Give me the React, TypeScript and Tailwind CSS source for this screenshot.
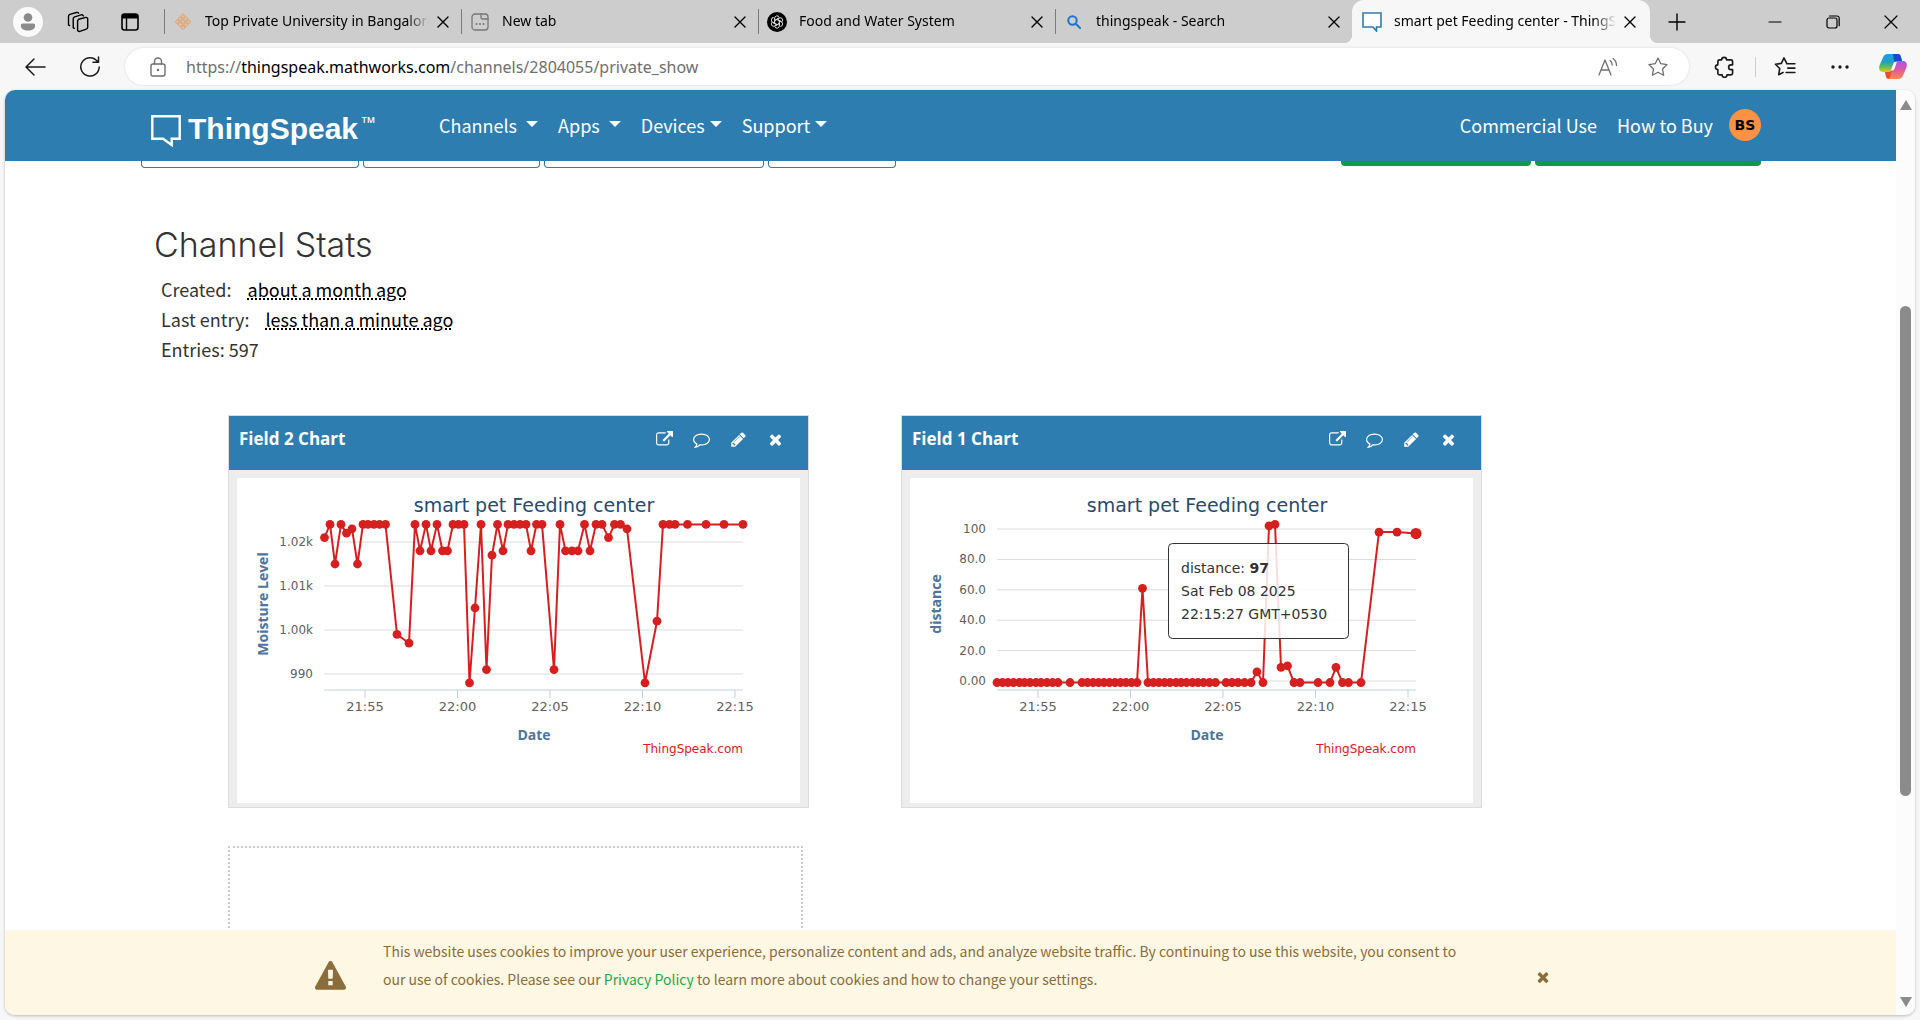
import React from "react";

const EXTERNAL =
  "M1408 928v320q0 119-84.5 203.5t-203.5 84.5h-832q-119 0-203.5-84.5t-84.5-203.5v-832q0-119 84.5-203.5t203.5-84.5h704q14 0 23 9t9 23v64q0 14-9 23t-23 9h-704q-66 0-113 47t-47 113v832q0 66 47 113t113 47h832q66 0 113-47t47-113v-320q0-14 9-23t23-9h64q14 0 23 9t9 23zm384-864v512q0 26-19 45t-45 19-45-19l-176-176-652 652q-10 10-23 10t-23-10l-114-114q-10-10-10-23t10-23l652-652-176-176q-19-19-19-45t19-45 45-19h512q26 0 45 19t19 45z";
const TIMES =
  "M1490 1322q0 40-28 68l-136 136q-28 28-68 28t-68-28l-294-294-294 294q-28 28-68 28t-68-28l-136-136q-28-28-28-68t28-68l294-294-294-294q-28-28-28-68t28-68l136-136q28-28 68-28t68 28l294 294 294-294q28-28 68-28t68 28l136 136q28 28 28 68t-28 68l-294 294 294 294q28 28 28 68z";
const PENCIL =
  "M491 1536l91-91-235-235-91 91v107h128v128h107zm523-928q0-22-22-22-10 0-17 7l-542 542q-7 7-7 17 0 22 22 22 10 0 17-7l542-542q7-7 7-17zm-54-192l416 416-832 832h-416v-416zm683 96q0 53-37 90l-166 166-416-416 166-165q36-38 90-38 53 0 91 38l235 234q37 39 37 91z";
const COMMENT =
  "M896 384q-204 0-381.5 69.5t-282 187.5-104.5 255q0 112 71.5 213.5t201.5 175.5l87 50-27 96q-24 91-70 172 152-63 275-171l43-38 57 6q69 8 130 8 204 0 381.5-69.5t282-187.5 104.5-255-104.5-255-282-187.5-381.5-69.5zm896 512q0 174-120 321.5t-326 233-450 85.5q-70 0-145-8-198 175-460 242-49 14-114 22h-5q-15 0-27-10.5t-16-27.5v-1q-3-4-.5-12t2-10 4.5-9.5l6-9 7-8.5 8-9q7-8 31-34.5t34.5-38 31-39.5 32.5-51 27-59 26-76q-157-89-247.5-220t-90.5-281q0-130 71-248.5t191-204.5 286-136.5 348-50.5 348 50.5 286 136.5 191 204.5 71 248.5z";
const WARNING =
  "M1024 1375v-190q0-14-9.5-23.5t-22.5-9.5h-192q-13 0-22.5 9.5t-9.5 23.5v190q0 14 9.5 23.5t22.5 9.5h192q13 0 22.5-9.5t9.5-23.5zm-2-374l18-459q0-12-10-19-13-11-24-11h-220q-11 0-24 11-10 7-10 21l17 457q0 10 10 16.5t24 6.5h185q14 0 23.5-6.5t10.5-16.5zm-14-934l768 1408q35 63-2 126-17 29-46.5 46t-63.5 17h-1536q-34 0-63.5-17t-46.5-46q-37-63-2-126l768-1408q17-31 47-49t65-18 65 18 47 49z";

function Glyph({ d, className }: { d: string; className: string }) {
  return (
    <svg viewBox="0 0 1792 1792" className={className} fill="currentColor" aria-hidden="true">
      <path d={d} />
    </svg>
  );
}

function Line({ children, size = 20, width = 1.3, box = 20 }: { children: React.ReactNode; size?: number; width?: number; box?: number }) {
  return (
    <svg
      width={size}
      height={size}
      viewBox={`0 0 ${box} ${box}`}
      fill="none"
      stroke="currentColor"
      strokeWidth={width}
      strokeLinecap="round"
      strokeLinejoin="round"
      aria-hidden="true"
    >
      {children}
    </svg>
  );
}

function CloseIcon() {
  return (
    <Line size={12} box={12} width={1.4}>
      <path d="M1 1l10 10M11 1L1 11" />
    </Line>
  );
}

const LATTICE = [0, 4, 8];

const tabs = [
  {
    title: "Top Private University in Bangalore",
    icon: (
      <svg width="18" height="18" viewBox="0 0 18 18" fill="none" stroke="#e2a878" strokeWidth="1.1">
        <g transform="rotate(45 9 9) translate(3.4 3.4)">
          {LATTICE.map((x) => LATTICE.map((y) => <rect key={`${x}-${y}`} x={x} y={y} width="2.900" height="2.900" />))}
        </g>
      </svg>
    ),
  },
  {
    title: "New tab",
    icon: (
      <Line size={18} box={18} width={1.3}>
        <g stroke="#777">
          <rect x="1" y="1" width="16" height="16" rx="3" />
          <path d="M10 1v3.500a1.500 1.500 0 0 0 1.500 1.500H17" />
          <path d="M5.500 11h.01M9 11h.01M12.500 11h.01" strokeWidth="2" />
        </g>
      </Line>
    ),
  },
  {
    title: "Food and Water System",
    icon: (
      <svg width="20" height="20" viewBox="0 0 20 20">
        <circle cx="10" cy="10" r="10" fill="#000" />
        <g fill="none" stroke="#ddd" strokeWidth="1">
          {[0, 60, 120, 180, 240, 300].map((a) => (
            <path key={a} transform={`rotate(${a} 10 10)`} d="M7.600 11.400V6.200a2.500 2.500 0 0 1 4.600-1.200M7.600 8.600l4.400-2.500" />
          ))}
        </g>
      </svg>
    ),
  },
  {
    title: "thingspeak - Search",
    icon: (
      <Line size={14} box={14} width={2}>
        <g stroke="#1a73d0">
          <circle cx="5.500" cy="5.500" r="4.200" />
          <path d="M9 9l4 4" />
        </g>
      </Line>
    ),
  },
  {
    title: "smart pet Feeding center - ThingSpeak IoT",
    active: true,
    icon: (
      <svg width="20" height="20" viewBox="0 0 20 20" fill="#fff" stroke="#2e7db1" strokeWidth="1.600">
        <path d="M1 1h18v14h-4.500V19L11 15H1z" />
      </svg>
    ),
  },
];

function TabBar() {
  return (
    <div className="flex h-[43px] items-center bg-[#cdcdcd] text-black">
      <div className="flex w-[164px] shrink-0 items-center gap-6 pl-[13px]">
        <button aria-label="Profile" className="flex size-[30px] items-center justify-center rounded-full bg-[#fafafa]">
          <svg width="16" height="18" viewBox="0 0 16 18" fill="#8b8b8b">
            <circle cx="8" cy="4.500" r="4.300" />
            <path d="M2.500 10.500h11a1.700 1.700 0 0 1 1.700 1.700c0 3.400-3 5.300-7.200 5.300S.8 15.600.8 12.200a1.700 1.700 0 0 1 1.700-1.700z" />
          </svg>
        </button>
        <button aria-label="Workspaces">
          <Line size={22} box={22} width={1.4}>
            <path d="M11.700 8.300l7-1.900a1.600 1.600 0 0 1 2 1.600v8.200c0 1-.5 1.600-1.400 1.900l-6.500 2.200a1.600 1.600 0 0 1-2.200-1.600v-8.500c0-1 .3-1.600 1.100-1.900z" />
            <path d="M7.300 17.300l-1.100-.6V7.700c0-1 .5-1.600 1.400-1.900l6.500-1.900c1.300-.3 2 .2 2.300 1" />
            <path d="M2.600 14.600l-1.100-.7V5.400c0-1 .5-1.700 1.400-2l6.500-1.900c1.200-.3 1.900.1 2.200.7" />
          </Line>
        </button>
        <button aria-label="Tab actions" className="ml-2">
          <svg width="18" height="18" viewBox="0 0 18 18" aria-hidden="true">
            <rect x="1" y="1" width="16" height="16" rx="2.500" fill="none" stroke="#000" strokeWidth="1.600" />
            <path d="M1 3.500A2.500 2.500 0 0 1 3.500 1h11A2.500 2.500 0 0 1 17 3.500V5.500H1z" />
            <path d="M5.500 5v12" stroke="#000" strokeWidth="1.400" />
          </svg>
        </button>
      </div>
      {tabs.map((t) => (
        <div
          key={t.title}
          className={
            t.active
              ? "relative flex h-full w-[298px] min-w-0 items-center rounded-t-xl bg-[#f7f7f7] pr-[14px] pl-[10px]"
              : "flex h-[25px] w-[297px] min-w-0 items-center border-l border-[#7a7a7a] pr-3 pl-2"
          }
        >
          {t.active && (
            <>
              <span className="absolute bottom-0 -left-2 size-2 bg-[radial-gradient(circle_at_0_0,#cdcdcd_8px,#f7f7f7_8px)]" />
              <span className="absolute -right-2 bottom-0 size-2 bg-[radial-gradient(circle_at_100%_0,#cdcdcd_8px,#f7f7f7_8px)]" />
            </>
          )}
          <span className="flex w-5 shrink-0 justify-center">{t.icon}</span>
          <span className="mb-0.5 ml-3 min-w-0 flex-1 overflow-hidden font-['Noto_Sans',sans-serif] text-[14px] leading-5 whitespace-nowrap [mask-image:linear-gradient(to_right,black_90%,transparent)]">
            {t.title}
          </span>
          <button aria-label={`Close ${t.title}`} className="ml-2 shrink-0">
            <CloseIcon />
          </button>
        </div>
      ))}
      <button aria-label="New tab" className="ml-[18px]">
        <Line size={18} box={18} width={1.4}>
          <path d="M9 1v16M1 9h16" />
        </Line>
      </button>
      <div className="ml-auto flex items-center gap-[44px] pr-[22px]">
        <button aria-label="Minimize">
          <Line size={14} box={14} width={1.2}>
            <path d="M1 7h12" />
          </Line>
        </button>
        <button aria-label="Restore">
          <Line size={14} box={14} width={1.2}>
            <rect x="1" y="3" width="10" height="10" rx="2" />
            <path d="M3.500 1H11a2.200 2.200 0 0 1 2.200 2.200v7.500" />
          </Line>
        </button>
        <button aria-label="Close window">
          <Line size={14} box={14} width={1.2}>
            <path d="M1 1l12 12M13 1L1 13" />
          </Line>
        </button>
      </div>
    </div>
  );
}

const STAR = "M10 1.800l2.500 5.200 5.700.8-4.100 4 1 5.700-5.100-2.700-5.100 2.700 1-5.700-4.100-4 5.700-.8z";

function Toolbar() {
  return (
    <div className="flex h-[47px] items-center bg-[#f7f7f7] pr-[13px] pl-[24px] text-[#1b1b1b]">
      <button aria-label="Back">
        <Line size={22} box={22} width={1.5}>
          <path d="M21 11H2M10 3l-8 8 8 8" />
        </Line>
      </button>
      <button aria-label="Refresh" className="ml-[33px]">
        <Line size={22} box={22} width={1.5}>
          <path d="M18.500 5.500A9.200 9.200 0 1 0 20.200 11M19.500 1v5.300h-5.500" />
        </Line>
      </button>
      <div className="ml-6 flex h-[37px] min-w-0 flex-1 items-center rounded-full bg-white pr-5 pl-[23px] text-[#6f6f6f] shadow-[0_0_3px_rgba(0,0,0,0.12)]">
        <Line size={20} box={20} width={1.4}>
          <rect x="3" y="7" width="14" height="12" rx="2" />
          <path d="M6.500 7V4.500a3.500 3.500 0 0 1 7 0V7" />
          <path d="M10 13h.01" strokeWidth="2.500" />
        </Line>
        <div className="relative ml-[18px] flex-1 font-['Noto_Sans',sans-serif] text-[16px] leading-6 whitespace-nowrap">
          <input aria-label="Address" className="absolute inset-0 w-full bg-transparent outline-none" />
          https://<span className="text-black">thingspeak.mathworks.com</span>/channels/2804055/private_show
        </div>
        <button aria-label="Read aloud" className="mr-[29px]">
          <Line size={20} box={20} width={1.3}>
            <path d="M1 18L7 3l6 15M3.200 13h7.600M12 3.500c1.500 1 2.200 2.600 2.200 4.500M15 1.500c2.300 1.600 3.500 4 3.500 7" />
          </Line>
        </button>
        <button aria-label="Add to favorites">
          <Line size={22} width={1.2}>
            <path d={STAR} />
          </Line>
        </button>
      </div>
      <button aria-label="Extensions" className="ml-[25px]">
        <Line size={22} width={1.5}>
          <path d="M7 3.500a2.200 2.200 0 0 1 4.400 0h4a1.500 1.500 0 0 1 1.500 1.500v3h-1.400a2.200 2.200 0 0 0 0 4.400h1.400v3.300a1.500 1.500 0 0 1-1.500 1.500h-3.600a2.200 2.200 0 0 1-4.400 0H5a1.500 1.500 0 0 1-1.500-1.500v-3.300a2.200 2.200 0 0 1 0-4.400V5A1.500 1.500 0 0 1 5 3.500z" />
        </Line>
      </button>
      <span className="ml-[19px] h-5 w-px bg-[#cfcfcf]" />
      <button aria-label="Favorites" className="ml-[18px]">
        <Line size={22} width={1.5}>
          <path d="M11.500 6.500L9 1.800 6.700 6.700l-5.400.8 3.900 3.900-.9 5.600 3.900-2M11.500 7H19M12.500 11H19M11 15h8" />
        </Line>
      </button>
      <button aria-label="Settings and more" className="ml-[35px]">
        <svg width="18" height="4" viewBox="0 0 18 4" fill="#1b1b1b">
          <circle cx="2" cy="2" r="1.700" />
          <circle cx="9" cy="2" r="1.700" />
          <circle cx="16" cy="2" r="1.700" />
        </svg>
      </button>
      <button aria-label="Copilot" className="ml-[30px]">
        <svg width="28" height="27" viewBox="0 0 28 27">
          <defs>
            <linearGradient id="cpA" x1="0" y1="0" x2="0" y2="1">
              <stop offset="0" stopColor="#1aa0e8" />
              <stop offset=".45" stopColor="#1f9fc0" />
              <stop offset=".75" stopColor="#6cc04a" />
              <stop offset="1" stopColor="#f2c51c" />
            </linearGradient>
            <linearGradient id="cpB" x1="0" y1="0" x2="0" y2="1">
              <stop offset="0" stopColor="#a458f0" />
              <stop offset=".5" stopColor="#e4579a" />
              <stop offset="1" stopColor="#ff8a4a" />
            </linearGradient>
          </defs>
          <path d="M9 1h10c2 0 2.600 1.500 3 3l1 4h-4c-2.500 0-3.300.5-4 3l-2 5c-.7 2-1.700 3-4 3H4c-3.500 0-4.500-3-3.500-6.500L4 4.500C4.800 2 6.500 1 9 1z" fill="url(#cpA)" />
          <path d="M14 1h5c2 0 2.600 1.500 3 3l1 4h-4c-2 0-3 1-3.500 2.500z" fill="#1b48cf" />
          <path d="M19 26H10c-2 0-2.600-1.500-3-3l-1-4h3c2.500 0 3.300-.5 4-3l2-5c.7-2 1.700-3 4-3h5c3.500 0 4.500 3 3.500 6.500L24 22.500c-.8 2.500-2.500 3.500-5 3.500z" fill="url(#cpB)" />
          <path d="M6 19h3c2.300 0 3.300-.8 4-3l-1.500 7c-.4 2-1.500 3-2.500 2.800C7.700 25.500 7.300 24.400 7 23z" fill="#e8502c" />
          <path d="M15.800 8.700c-1 .5-1.300 1.300-1.700 2.500L12 17.300c1.500.4 3-.2 3.600-1.900l2.200-6.200z" fill="#fff" />
        </svg>
      </button>
    </div>
  );
}

function MenuItem({ label, tight }: { label: string; tight?: boolean }) {
  return (
    <button className={tight ? "flex items-center gap-[5px]" : "flex items-center gap-[9px]"}>
      {label}
      <span className="mb-0.5 border-x-6 border-t-6 border-x-transparent border-t-white" />
    </button>
  );
}

function SiteHeader() {
  return (
    <header className="flex h-[71px] items-center bg-[#2e7db1] pr-[135px] pb-px pl-[146px] font-['Noto_Sans_CJK_SC','Noto_Sans',sans-serif] text-[18px] leading-6 text-white">
      <a href="#home" className="mt-2 flex items-center font-['Liberation_Sans',sans-serif]">
        <svg width="30" height="32" viewBox="0 0 30 32" fill="none" stroke="#fff" strokeWidth="2.400" className="mt-1" aria-hidden="true">
          <path d="M1.300 1.300h27.400v22.400h-8V30L12 23.700H1.300z" />
        </svg>
        <span className="ml-[7px] text-[30px] leading-8 font-bold">ThingSpeak</span>
        <span className="ml-0.5 self-start text-[16px] leading-6">™</span>
      </a>
      <nav className="ml-[63px] flex items-center gap-5">
        <MenuItem label="Channels" />
        <MenuItem label="Apps" />
        <MenuItem label="Devices" tight />
        <MenuItem label="Support" tight />
      </nav>
      <div className="ml-auto flex items-center gap-5">
        <a href="#commercial">Commercial Use</a>
        <a href="#buy">How to Buy</a>
        <button className="-ml-1 flex size-8 items-center justify-center rounded-full bg-[#ff9142] font-['DejaVu_Sans',sans-serif] text-[14px] font-bold text-black">
          BS
        </button>
      </div>
    </header>
  );
}

type Pt = [number, number];
const flat = (xs: number[], v: number): Pt[] => xs.map((x) => [x, v]);

const moisture: Pt[] = [
  [87.5, 1021], [93, 1024], [98, 1015], [104, 1024], [109.5, 1022], [115, 1023], [120.5, 1015],
  ...flat([126, 131, 137, 142.5, 148.5], 1024),
  [160, 999], [172, 997], [178, 1024], [183, 1018], [189, 1024], [194, 1018], [200, 1024], [205.5, 1018], [210.5, 1018],
  ...flat([216, 221.5, 227], 1024),
  [232.5, 988], [238, 1005], [244, 1024], [249.5, 991], [255, 1017], [260.5, 1024], [266, 1018],
  ...flat([271, 277, 283, 289], 1024),
  [294, 1018], [299.5, 1024], [305, 1024], [317, 991], [323, 1024],
  ...flat([328.5, 335, 341], 1018),
  [347.5, 1024], [353, 1018], [359, 1024], [365, 1024], [371.5, 1021], [377.5, 1024], [383.5, 1024], [390, 1023], [408, 988], [420, 1002],
  ...flat([426, 432.5, 438, 450.5, 469, 487, 506], 1024),
];

const distance: Pt[] = [
  ...flat([87, 92.5, 98, 103.5, 109.5, 114.5, 120, 126, 131, 137, 142.5, 148, 160, 172, 177.5, 183, 188.5, 194, 199.5, 205, 210.5, 216, 221.5, 227], -1),
  [232.5, 61],
  ...flat([238, 243.5, 249, 254.5, 260, 266, 271, 276.5, 282.5, 288, 293.5, 299.5, 305.5, 316, 322, 328, 334.5, 341], -1),
  [347, 6], [353, -1], [359, 102], [365, 103], [371, 9], [377.5, 10],
  ...flat([384, 390, 408, 420], -1),
  [426, 9],
  ...flat([432.5, 438.5, 451], -1),
  [469, 98], [487, 98], [506, 97],
];

const times: [number, string][] = [
  [128, "21:55"], [220.5, "22:00"], [313, "22:05"], [405.5, "22:10"], [498, "22:15"],
];

interface ChartProps {
  points: Pt[];
  grid: [number, string][];
  y0: number;
  perUnit: number;
  base: number;
  label: string;
  tooltip?: boolean;
}

function Chart({ points, grid, y0, perUnit, base, label, tooltip }: ChartProps) {
  const y = (v: number) => y0 - (v - base) * perUnit;
  return (
    <svg viewBox="0 0 563 325" className="block w-full bg-white font-['DejaVu_Sans',sans-serif]" role="img" aria-label={`${label} chart`}>
      <text x="297" y="34" textAnchor="middle" fontSize="19" fill="#274b6d">
        smart pet Feeding center
      </text>
      {grid.map(([v, t]) => (
        <g key={t}>
          <path d={`M87 ${y(v)}H506`} stroke="#dcdcdc" />
          <text x="76" y={y(v) + 4} textAnchor="end" fontSize="12" fill="#606060">
            {t}
          </text>
        </g>
      ))}
      <path d="M87 212H506" stroke="#c0d0e0" />
      {times.map(([x, t]) => (
        <g key={t}>
          <path d={`M${x} 212v8`} stroke="#c0d0e0" />
          <text x={x} y="233" textAnchor="middle" fontSize="13" fill="#606060">
            {t}
          </text>
        </g>
      ))}
      <text x="297" y="262" textAnchor="middle" fontSize="14" fontWeight="700" fill="#4d759e" className="font-['Open_Sans',sans-serif]">
        Date
      </text>
      <text transform="translate(31 126) rotate(-90)" textAnchor="middle" fontSize="14" fontWeight="700" fill="#4d759e" className="font-['Open_Sans',sans-serif]">
        {label}
      </text>
      <polyline points={points.map(([x, v]) => `${x},${y(v)}`).join(" ")} fill="none" stroke="#d62020" strokeWidth="2" strokeLinejoin="round" />
      {points.map(([x, v], i) => (
        <circle key={x} cx={x} cy={y(v)} r={tooltip && i === points.length - 1 ? 5.6 : 4.4} fill="#d62020" />
      ))}
      <text x="506" y="275" textAnchor="end" fontSize="12" fill="#d62020">
        ThingSpeak.com
      </text>
      {tooltip && (
        <g fontSize="14" fill="#333">
          <rect x="258.500" y="65.500" width="180" height="95" rx="4" fill="#fff" fillOpacity=".85" stroke="#333" />
          <text x="271" y="95">
            distance: <tspan fontWeight="700">97</tspan>
          </text>
          <text x="271" y="118">Sat Feb 08 2025</text>
          <text x="271" y="141">22:15:27 GMT+0530</text>
        </g>
      )}
    </svg>
  );
}

function Card({ title, children }: { title: string; children: React.ReactNode }) {
  return (
    <section className="min-w-0 border border-[#dcdcdc] bg-[#ededed]">
      <div className="flex h-[54px] items-start bg-[#2e7db1] pt-[11px] pr-6 pl-[10px] text-white">
        <h2 className="flex-1 font-['Open_Sans',sans-serif] text-[17px] leading-6 font-bold">{title}</h2>
        <div className="flex h-[25px] items-center gap-5">
          <button aria-label="Open in new window">
            <Glyph d={EXTERNAL} className="size-[17px]" />
          </button>
          <button aria-label="Comments">
            <Glyph d={COMMENT} className="size-[17px]" />
          </button>
          <button aria-label="Edit">
            <Glyph d={PENCIL} className="size-[17px]" />
          </button>
          <button aria-label="Close">
            <Glyph d={TIMES} className="size-[17px]" />
          </button>
        </div>
      </div>
      <div className="px-2 pt-2 pb-1">{children}</div>
    </section>
  );
}

function ScrollBar() {
  return (
    <div className="flex w-[19px] shrink-0 flex-col items-center bg-[#fcfcfc] py-2" aria-hidden="true">
      <span className="mt-0.5 border-x-6 border-b-10 border-x-transparent border-b-[#8b8b8b]" />
      <span className="h-[196px]" />
      <span className="h-[490px] w-[11px] rounded-full bg-[#8b8b8b]" />
      <span className="mt-auto border-x-6 border-t-10 border-x-transparent border-t-[#8b8b8b]" />
    </div>
  );
}

export default function App() {
  return (
    <div className="flex h-screen flex-col overflow-hidden bg-[#f7f7f7] font-['Open_Sans',sans-serif]">
      <TabBar />
      <Toolbar />
      <div className="mx-[5px] mb-[5px] flex min-h-0 flex-1 overflow-hidden rounded-[10px] bg-white shadow-[0_1px_3px_rgba(0,0,0,0.25)]">
        <div className="flex min-w-0 flex-1 flex-col">
          <SiteHeader />
          <main className="min-h-0 flex-1 overflow-hidden font-['Noto_Sans_CJK_SC','Noto_Sans',sans-serif] text-[#333]">
            <div className="flex gap-1 pr-[135px] pl-[136px]">
              <button aria-label="Private View" className="h-[7px] w-[218px] rounded-b border border-t-0 border-[#2e7db1]" />
              <button aria-label="Public View" className="h-[7px] w-[177px] rounded-b border border-t-0 border-[#2e7db1]" />
              <button aria-label="Channel Settings" className="h-[7px] w-[220px] rounded-b border border-t-0 border-[#2e7db1]" />
              <button aria-label="Sharing" className="h-[7px] w-[128px] rounded-b border border-t-0 border-[#2e7db1]" />
              <button aria-label="MATLAB Analysis" className="ml-auto h-[5px] w-[190px] rounded-b bg-[#0b9d46]" />
              <button aria-label="MATLAB Visualization" className="h-[5px] w-[226px] rounded-b bg-[#0b9d46]" />
            </div>
            <h1 className="mt-[57px] ml-[149px] font-['Inter',sans-serif] text-[34px] leading-10 font-light">Channel Stats</h1>
            <div className="mt-[9px] ml-[156px] text-[18px] leading-[30px]">
              <p>
                Created: <abbr title="2025-01-08" className="ml-3 text-black underline decoration-dotted underline-offset-2">about a month ago</abbr>
              </p>
              <p>
                Last entry: <abbr title="2025-02-08" className="ml-3 text-black underline decoration-dotted underline-offset-2">less than a minute ago</abbr>
              </p>
              <p>Entries: 597</p>
            </div>
            <div className="mt-[51px] mr-[414px] ml-[223px] grid grid-cols-2 gap-x-[92px] gap-y-[38px]">
              <Card title="Field 2 Chart">
                <Chart
                  points={moisture}
                  grid={[[1020, "1.02k"], [1010, "1.01k"], [1000, "1.00k"], [990, "990"]]}
                  base={990}
                  y0={196}
                  perUnit={4.4}
                  label="Moisture Level"
                />
              </Card>
              <Card title="Field 1 Chart">
                <Chart
                  points={distance}
                  grid={[[100, "100"], [80, "80.0"], [60, "60.0"], [40, "40.0"], [20, "20.0"], [0, "0.00"]]}
                  base={0}
                  y0={203}
                  perUnit={1.52}
                  label="distance"
                  tooltip
                />
              </Card>
              <div className="mr-[6px] h-[390px] border-2 border-dotted border-[#ccc]" />
            </div>
          </main>
          <div className="flex h-[85px] shrink-0 items-center bg-[#fdf7e3] pr-[345px] pl-[310px] font-['Noto_Sans_CJK_SC','Noto_Sans',sans-serif] text-[#8a6d3b]">
            <Glyph d={WARNING} className="mt-2 size-[31px] shrink-0" />
            <p className="mr-auto mb-4 ml-[37px] max-w-[1085px] text-[14px] leading-7">
              This website uses cookies to improve your user experience, personalize content and ads, and analyze website traffic. By continuing to use this website, you consent to our use of cookies. Please see our{" "}
              <a href="#privacy" className="text-[#28a745]">
                Privacy Policy
              </a>{" "}
              to learn more about cookies and how to change your settings.
            </p>
            <button aria-label="Dismiss" className="mt-2 ml-4 shrink-0">
              <Glyph d={TIMES} className="size-4" />
            </button>
          </div>
        </div>
        <ScrollBar />
      </div>
    </div>
  );
}
